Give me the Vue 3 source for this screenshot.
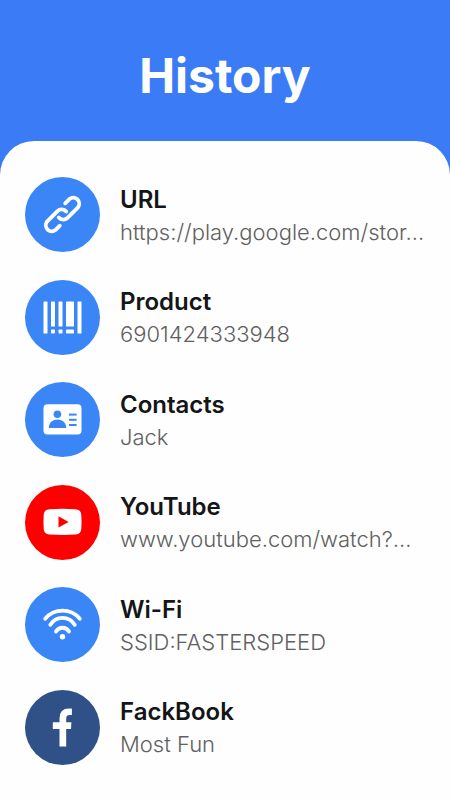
<template>
  <main class="page">
    <header class="header">
      <h1>History</h1>
    </header>

    <ul class="list">
      <li v-for="item in items" :key="item.title" class="item">
        <span class="icon" :class="item.type">
          <svg v-if="item.type === 'url'" viewBox="0 0 75 75" class="line">
            <path d="M40.2 26.3 L44.6 21.9 A6 6 0 0 1 53 30.3 L42.5 40.9 A6 6 0 0 1 33.8 40.5" />
            <path d="M34.8 48.7 L30.4 53.1 A6 6 0 0 1 22 44.7 L32.5 34.1 A6 6 0 0 1 41.2 34.5" />
          </svg>

          <svg v-else-if="item.type === 'product'" viewBox="0 0 75 75">
            <rect x="18.5" y="21.5" width="4" height="32" rx="0.6" />
            <rect x="26" y="21.5" width="4" height="25" rx="0.6" />
            <rect x="26" y="49.5" width="4" height="4" rx="0.8" />
            <rect x="33.5" y="21.5" width="4" height="25" rx="0.6" />
            <rect x="33.5" y="49.5" width="4" height="4" rx="0.8" />
            <rect x="41" y="21.5" width="8" height="25" rx="0.6" />
            <rect x="41" y="49.5" width="8" height="4" rx="0.8" />
            <rect x="52.5" y="21.5" width="4" height="32" rx="0.6" />
          </svg>

          <svg v-else-if="item.type === 'contacts'" viewBox="0 0 75 75">
            <rect x="18.5" y="22.2" width="38" height="30.2" rx="4" />
            <g class="cut">
              <circle cx="32.4" cy="32.3" r="3.8" />
              <path d="M23.8 46 C23.8 34.8 41.2 34.8 41.2 46 Z" />
              <rect x="44" y="31.6" width="7.6" height="2" />
              <rect x="44" y="36.8" width="7.6" height="2" />
              <rect x="44" y="42" width="7.6" height="2" />
            </g>
          </svg>

          <svg v-else-if="item.type === 'youtube'" viewBox="0 0 75 75">
            <path d="M24.5 24.3 Q37.5 23.3 50.5 24.3 Q56 24.6 56.3 30 Q56.8 37 56.3 44 Q56 49.2 50.5 49.5 Q37.5 50.3 24.5 49.5 Q19 49.2 18.7 44 Q18.2 37 18.7 30 Q19 24.6 24.5 24.3 Z" />
            <path d="M33.5 31.2 L43.6 36.9 L33.5 42.4 Z" class="cut" />
          </svg>

          <svg v-else-if="item.type === 'wifi'" viewBox="0 0 75 75">
            <g class="line">
              <path d="M20.2 31.7 A22.7 22.7 0 0 1 54.8 31.7" />
              <path d="M25.3 37.8 A14.2 14.2 0 0 1 49.7 37.8" />
              <path d="M31 44.5 A7.5 7.5 0 0 1 44 44.5" />
            </g>
            <circle cx="37.5" cy="49.8" r="2.7" />
          </svg>

          <svg v-else viewBox="0 0 75 75">
            <path d="M34.5 56.6 V38.9 H28.3 Q27.8 38.9 27.8 38.4 V32.7 Q27.8 32.2 28.3 32.2 H34.5 V28.5 Q34.5 18.6 44 18.6 H46.4 Q46.9 18.6 46.9 19.1 V24.4 Q46.9 24.9 46.4 24.9 H44.6 Q41.2 24.9 41.2 28.3 V32.2 H46.4 L46 38.9 H41.2 V56.6 Z" />
          </svg>
        </span>

        <div class="text">
          <h2>{{ item.title }}</h2>
          <p>{{ item.value }}</p>
        </div>
      </li>
    </ul>
  </main>
</template>

<script setup>
import { ref } from 'vue'

const items = ref([
  { type: 'url', title: 'URL', value: 'https://play.google.com/stor...' },
  { type: 'product', title: 'Product', value: '6901424333948' },
  { type: 'contacts', title: 'Contacts', value: 'Jack' },
  { type: 'youtube', title: 'YouTube', value: 'www.youtube.com/watch?...' },
  { type: 'wifi', title: 'Wi-Fi', value: 'SSID:FASTERSPEED' },
  { type: 'facebook', title: 'FackBook', value: 'Most Fun' },
])
</script>

<style>
body { margin: 0; background: #3b7cf6; }
</style>

<style scoped>
.page {
  display: flex;
  flex-direction: column;
  min-height: 100vh;
  background: #3b7cf6;
  font-family: Inter, "Liberation Sans", sans-serif;
}
.header { padding: 46px 24px 35px; text-align: center; }
h1 { margin: 0; color: #fff; font-size: 48px; line-height: 60px; font-weight: 700; }

.list {
  flex: 1;
  display: flex;
  flex-direction: column;
  justify-content: space-between;
  gap: 16px;
  margin: 0;
  padding: 36px 16px 35px 25px;
  list-style: none;
  background: #fefefe;
  border-radius: 34px 34px 0 0;
}
.item { display: flex; align-items: center; gap: 20px; }

.icon { flex: none; width: 75px; height: 75px; border-radius: 50%; background: #3b86f7; color: #3b86f7; }
.icon.youtube { background: #fe0000; color: #fe0000; }
.icon.facebook { background: #2f5188; color: #2f5188; }
.icon svg { display: block; width: 100%; height: 100%; fill: #fff; }
.icon .line { fill: none; stroke: #fff; stroke-width: 3.8; stroke-linecap: round; stroke-linejoin: round; }
.icon svg.line { fill: none; }
.icon .cut { fill: currentColor; }

.text { min-width: 0; padding-top: 2px; }
h2 { margin: 0; color: #141516; font-size: 24px; line-height: 33px; font-weight: 600; }
p {
  margin: 0;
  overflow: hidden;
  color: #606060;
  font-size: 22px;
  line-height: 33px;
  font-weight: 300;
  text-overflow: ellipsis;
  white-space: nowrap;
}
</style>
